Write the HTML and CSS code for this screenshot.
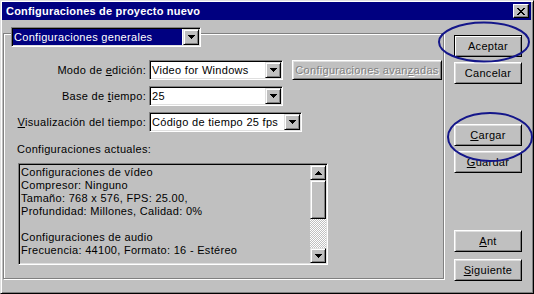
FILE: index.html
```html
<!DOCTYPE html>
<html lang="es">
<head>
    <meta charset="UTF-8">
    <meta name="viewport" content="width=device-width, initial-scale=1.0">
    <title>Configuraciones de proyecto nuevo</title>
    <link rel="stylesheet" href="styles.css">
</head>
<body>
    <div class="window">
        <div class="titlebar">
            <span class="title">Configuraciones de proyecto nuevo</span>
            <span class="close">
                <svg width="8" height="7" viewBox="0 0 8 7"><path d="M0 0h2v1H0zM6 0h2v1H6zM1 1h2v1H1zM5 1h2v1H5zM2 2h4v1H2zM3 3h2v1H3zM2 4h4v1H2zM1 5h2v1H1zM5 5h2v1H5zM0 6h2v1H0zM6 6h2v1H6z" fill="#000"/></svg>
            </span>
        </div>

        <div class="body">
            <div class="group">
                <div class="combo head-combo">
                    <span class="combo-text selected">Configuraciones generales</span>
                    <span class="arrow-btn"><svg width="7" height="4" viewBox="0 0 7 4"><path d="M0 0h7v1H6v1H5v1H4v1H3V3H2V2H1V1H0z" fill="#000"/></svg></span>
                </div>

                <div class="row row-first">
                    <span class="label">Modo de <u>e</u>dición:</span>
                    <div class="combo combo-short">
                        <span class="combo-text">Video for Windows</span>
                        <span class="arrow-btn"><svg width="7" height="4" viewBox="0 0 7 4"><path d="M0 0h7v1H6v1H5v1H4v1H3V3H2V2H1V1H0z" fill="#000"/></svg></span>
                    </div>
                    <span class="btn btn-advanced">Configuraciones avan<u>z</u>adas</span>
                </div>

                <div class="row">
                    <span class="label">Base de <u>t</u>iempo:</span>
                    <div class="combo combo-short">
                        <span class="combo-text">25</span>
                        <span class="arrow-btn"><svg width="7" height="4" viewBox="0 0 7 4"><path d="M0 0h7v1H6v1H5v1H4v1H3V3H2V2H1V1H0z" fill="#000"/></svg></span>
                    </div>
                </div>

                <div class="row">
                    <span class="label"><u>V</u>isualización del tiempo:</span>
                    <div class="combo combo-long">
                        <span class="combo-text">Código de tiempo 25 fps</span>
                        <span class="arrow-btn"><svg width="7" height="4" viewBox="0 0 7 4"><path d="M0 0h7v1H6v1H5v1H4v1H3V3H2V2H1V1H0z" fill="#000"/></svg></span>
                    </div>
                </div>

                <div class="current-label">Configuraciones actuales:</div>
                <div class="listbox">
                    <div class="list-text">
                        <div>Configuraciones de vídeo</div>
                        <div>Compresor: Ninguno</div>
                        <div>Tamaño: 768 x 576, FPS: 25.00,</div>
                        <div>Profundidad: Millones, Calidad: 0%</div>
                        <div>&nbsp;</div>
                        <div>Configuraciones de audio</div>
                        <div>Frecuencia: 44100, Formato: 16 - Estéreo</div>
                    </div>
                    <div class="scrollbar">
                        <span class="sb-btn"><svg width="7" height="4" viewBox="0 0 7 4"><path d="M3 0h1v1h1v1h1v1h1v1H0V3h1V2h1V1h1z" fill="#000"/></svg></span>
                        <span class="sb-thumb"></span>
                        <span class="sb-track"></span>
                        <span class="sb-btn"><svg width="7" height="4" viewBox="0 0 7 4"><path d="M0 0h7v1H6v1H5v1H4v1H3V3H2V2H1V1H0z" fill="#000"/></svg></span>
                    </div>
                </div>
            </div>

            <div class="buttons">
                <span class="btn btn-default">Aceptar</span>
                <span class="btn btn-cancel">Cancelar</span>
                <span class="btn btn-load"><u>C</u>argar</span>
                <span class="btn btn-save"><u>G</u>uardar</span>
                <span class="btn btn-prev"><u>A</u>nt</span>
                <span class="btn btn-next"><u>S</u>iguiente</span>
            </div>
        </div>

        <svg class="marks" width="534" height="294" viewBox="0 0 534 294">
            <ellipse cx="484" cy="42" rx="45" ry="19.5" fill="none" stroke="#14168a" stroke-width="2"/>
            <ellipse cx="490" cy="137" rx="42" ry="24" fill="none" stroke="#14168a" stroke-width="2"/>
        </svg>
    </div>
</body>
</html>
```

FILE: styles.css
```css
* {
    box-sizing: border-box;
}
body {
    margin: 0;
    background: #c0c0c0;
    font-family: "Liberation Sans", Arial, sans-serif;
    font-size: 11px;
    letter-spacing: 0.3px;
    color: #000;
}
.window {
    position: relative;
    width: 534px;
    height: 294px;
    background: #c0c0c0;
    border: 1px solid;
    border-color: #dfdfdf #000 #000 #dfdfdf;
    box-shadow: inset 1px 1px #fff, inset -1px -1px #808080;
    padding: 1px;
}
.titlebar {
    height: 18px;
    margin-right: 1px;
    display: flex;
    align-items: center;
    justify-content: space-between;
    background: #000080;
    color: #fff;
    font-weight: bold;
    letter-spacing: 0.2px;
    padding: 0 2px 0 4px;
}
.close {
    width: 16px;
    height: 14px;
    display: flex;
    align-items: center;
    justify-content: center;
    background: #c0c0c0;
    border: 1px solid;
    border-color: #fff #000 #000 #fff;
    box-shadow: inset -1px -1px #808080;
}
.body {
    display: flex;
    padding: 13px 0 0 1px;
}

/* group box */
.group {
    width: 441px;
    height: 246px;
    border: 1px solid #808080;
    box-shadow: inset 1px 1px #fff, 1px 1px #fff;
}
.combo {
    height: 20px;
    display: flex;
    background: #fff;
    border: 1px solid;
    border-color: #808080 #fff #fff #808080;
    box-shadow: inset 1px 1px #000, inset -1px -1px #dfdfdf;
    padding: 1px;
}
.combo-text {
    flex: 1;
    line-height: 16px;
    padding-left: 1px;
    white-space: nowrap;
    overflow: hidden;
}
.combo-text.selected {
    background: #000080;
    color: #fff;
    margin-right: 1px;
}
.arrow-btn,
.sb-btn {
    width: 16px;
    height: 16px;
    display: flex;
    align-items: center;
    justify-content: center;
    background: #c0c0c0;
    border: 1px solid;
    border-color: #dfdfdf #000 #000 #dfdfdf;
    box-shadow: inset 1px 1px #fff, inset -1px -1px #808080;
}
.head-combo {
    width: 190px;
    margin: -7px 0 0 7px;
}
.combo-short {
    width: 134px;
}
.combo-long {
    width: 153px;
}
.row {
    display: flex;
    align-items: center;
    height: 20px;
    margin-top: 6px;
}
.row-first {
    margin-top: 13px;
}
.label {
    width: 142px;
    margin-right: 3px;
    text-align: right;
    white-space: nowrap;
}
.current-label {
    margin: 11px 0 0 13px;
    line-height: 13px;
}
.listbox {
    width: 310px;
    height: 102px;
    margin: 7px 0 0 14px;
    display: flex;
    border: 1px solid;
    border-color: #808080 #fff #fff #808080;
    box-shadow: inset 1px 1px #000, inset -1px -1px #dfdfdf;
    padding: 1px;
}
.list-text {
    flex: 1;
    padding: 1px 0 0 1px;
    line-height: 13px;
    white-space: nowrap;
    overflow: hidden;
}
.scrollbar {
    width: 16px;
    display: flex;
    flex-direction: column;
}
.sb-btn {
    height: 15px;
}
.sb-thumb {
    height: 39px;
    background: #c0c0c0;
    border: 1px solid;
    border-color: #dfdfdf #000 #000 #dfdfdf;
    box-shadow: inset 1px 1px #fff, inset -1px -1px #808080;
}
.sb-track {
    flex: 1;
    background: repeating-conic-gradient(#fff 0 25%, #c0c0c0 0 50%) 0 0 / 2px 2px;
}

/* push buttons */
.btn {
    display: flex;
    align-items: center;
    justify-content: center;
    width: 68px;
    height: 22px;
    background: #c0c0c0;
    border: 1px solid;
    border-color: #fff #000 #000 #fff;
    box-shadow: inset 1px 1px #dfdfdf, inset -1px -1px #808080;
    white-space: nowrap;
}
.btn-advanced {
    width: 150px;
    height: 20px;
    margin-left: 9px;
    color: #808080;
    text-shadow: 1px 1px #fff;
}
.btn-default {
    border-color: #000;
    box-shadow: inset 1px 1px #fff, inset -1px -1px #808080;
}
.buttons {
    display: flex;
    flex-direction: column;
    margin-left: 10px;
    padding-top: 2px;
}
.btn-cancel,
.btn-save {
    margin-top: 5px;
}
.btn-load {
    margin-top: 40px;
}
.btn-prev {
    margin-top: 57px;
}
.btn-next {
    margin-top: 7px;
}
.marks {
    position: absolute;
    top: -1px;
    left: -1px;
    pointer-events: none;
}
```
